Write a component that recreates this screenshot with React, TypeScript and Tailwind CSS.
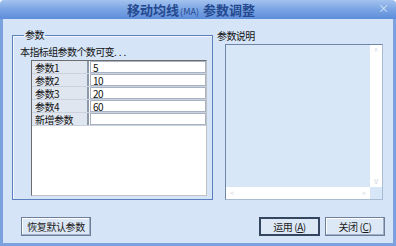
import React from "react";

const ROWS = [
  { name: "参数1", value: "5" },
  { name: "参数2", value: "10" },
  { name: "参数3", value: "20" },
  { name: "参数4", value: "60" },
  { name: "新增参数", value: "" },
];

function ParamRow({ name, value }: { name: string; value: string }) {
  return (
    <div className="flex h-[13px] overflow-hidden border-b border-[#c9d2de] leading-[11px]">
      <div className="flex w-[57px] shrink-0 items-center border-r-2 border-[#8d98a8] bg-[#dfe6ef] pl-[3px]">
        {name}
      </div>
      <div className="ml-[1px] flex flex-1 items-center border border-[#a8b2c0] bg-white pl-[2px]">
        {value}
      </div>
    </div>
  );
}

function Button({
  children,
  primary,
  className,
}: {
  children: React.ReactNode;
  primary?: boolean;
  className?: string;
}) {
  return (
    <button
      type="button"
      className={
        "flex h-[19px] items-center justify-center bg-[#dde8f6] leading-none text-[#1a1a1a] tracking-[-0.4px] " +
        (primary
          ? "border-2 border-[#34455f] "
          : "border border-[#6f7f99] shadow-[inset_-1px_-1px_0_#9fb0c8,inset_1px_1px_0_#ffffff] ") +
        (className ?? "")
      }
    >
      {children}
    </button>
  );
}

export default function App() {
  return (
    <div className="flex h-[246px] w-[396px] flex-col font-['Noto_Sans_CJK_SC',sans-serif] text-[10px] text-[#111]">
      {/* title bar */}
      <div className="relative flex h-[19px] shrink-0 items-center justify-center rounded-t-[4px] bg-gradient-to-b from-[#a4c3ef] via-[#7aa4e3] to-[#5d8cdb] pr-[14px]">
        <span className="text-[13px] font-bold leading-none text-[#24498f]">
          移动均线
          <span className="mx-[1px] text-[9px] font-normal">(MA)</span> 参数调整
        </span>
        <span className="absolute right-[7px] top-[3px] text-[11px] leading-none text-[#d9e6f8]">
          ×
        </span>
      </div>

      {/* body */}
      <div className="flex flex-1 flex-col border-x-[3px] border-b-[3px] border-[#7ba2df] bg-[#d5e4f6]">
        <div className="mt-[10px] flex">
          <fieldset className="ml-[9px] h-[171px] w-[201px] border border-[#5c7fc0] pl-[7px] shadow-[inset_1px_1px_0_#f3f8ff]">
            <legend className="ml-[4px] px-[1px] leading-[12px] tracking-[-0.5px]">
              参数
            </legend>
            <div className="mt-[5px] h-[12px] leading-[12px] tracking-[-0.6px]">
              本指标组参数个数可变<span className="tracking-[2px]">...</span>
            </div>
            <div className="ml-[11px] mt-[2px] flex h-[136px] w-[176px] flex-col border border-[#6d6d6d] border-b-[#c0c0c0] border-r-[#c0c0c0] bg-white tracking-[-0.5px]">
              {ROWS.map((r) => (
                <ParamRow key={r.name} name={r.name} value={r.value} />
              ))}
            </div>
          </fieldset>

          <div className="ml-[4px] flex flex-col">
            <div className="mt-[1px] h-[12px] leading-[12px] tracking-[-0.6px]">
              参数说明
            </div>
            <div className="ml-[8px] mt-[2px] flex h-[156px] w-[158px] border border-[#6f86a8] border-b-[#a9bbd3] border-r-[#a9bbd3]">
              <div className="flex flex-1 flex-col">
                <div className="flex-1 bg-[#d8e7f8]" />
                <div className="flex h-[12px] items-center justify-between bg-white px-[4px] text-[8px] leading-none text-[#d0d6e0]">
                  <span>&lt;</span>
                  <span>&gt;</span>
                </div>
              </div>
              <div className="flex w-[12px] flex-col">
                <div className="flex flex-1 flex-col items-center justify-between bg-white py-[2px] text-[8px] leading-none text-[#d0d6e0]">
                  <span>^</span>
                  <span>v</span>
                </div>
                <div className="h-[12px] bg-[#d8e7f8]" />
              </div>
            </div>
          </div>
        </div>

        <div className="mt-[17px] flex items-center">
          <Button className="ml-[18px] w-[70px]">恢复默认参数</Button>
          <Button primary className="ml-auto w-[61px]">
            运用 (<span className="underline">A</span>)
          </Button>
          <Button className="ml-[5px] mr-[8px] w-[60px]">
            关闭 (<span className="underline">C</span>)
          </Button>
        </div>
      </div>
    </div>
  );
}
